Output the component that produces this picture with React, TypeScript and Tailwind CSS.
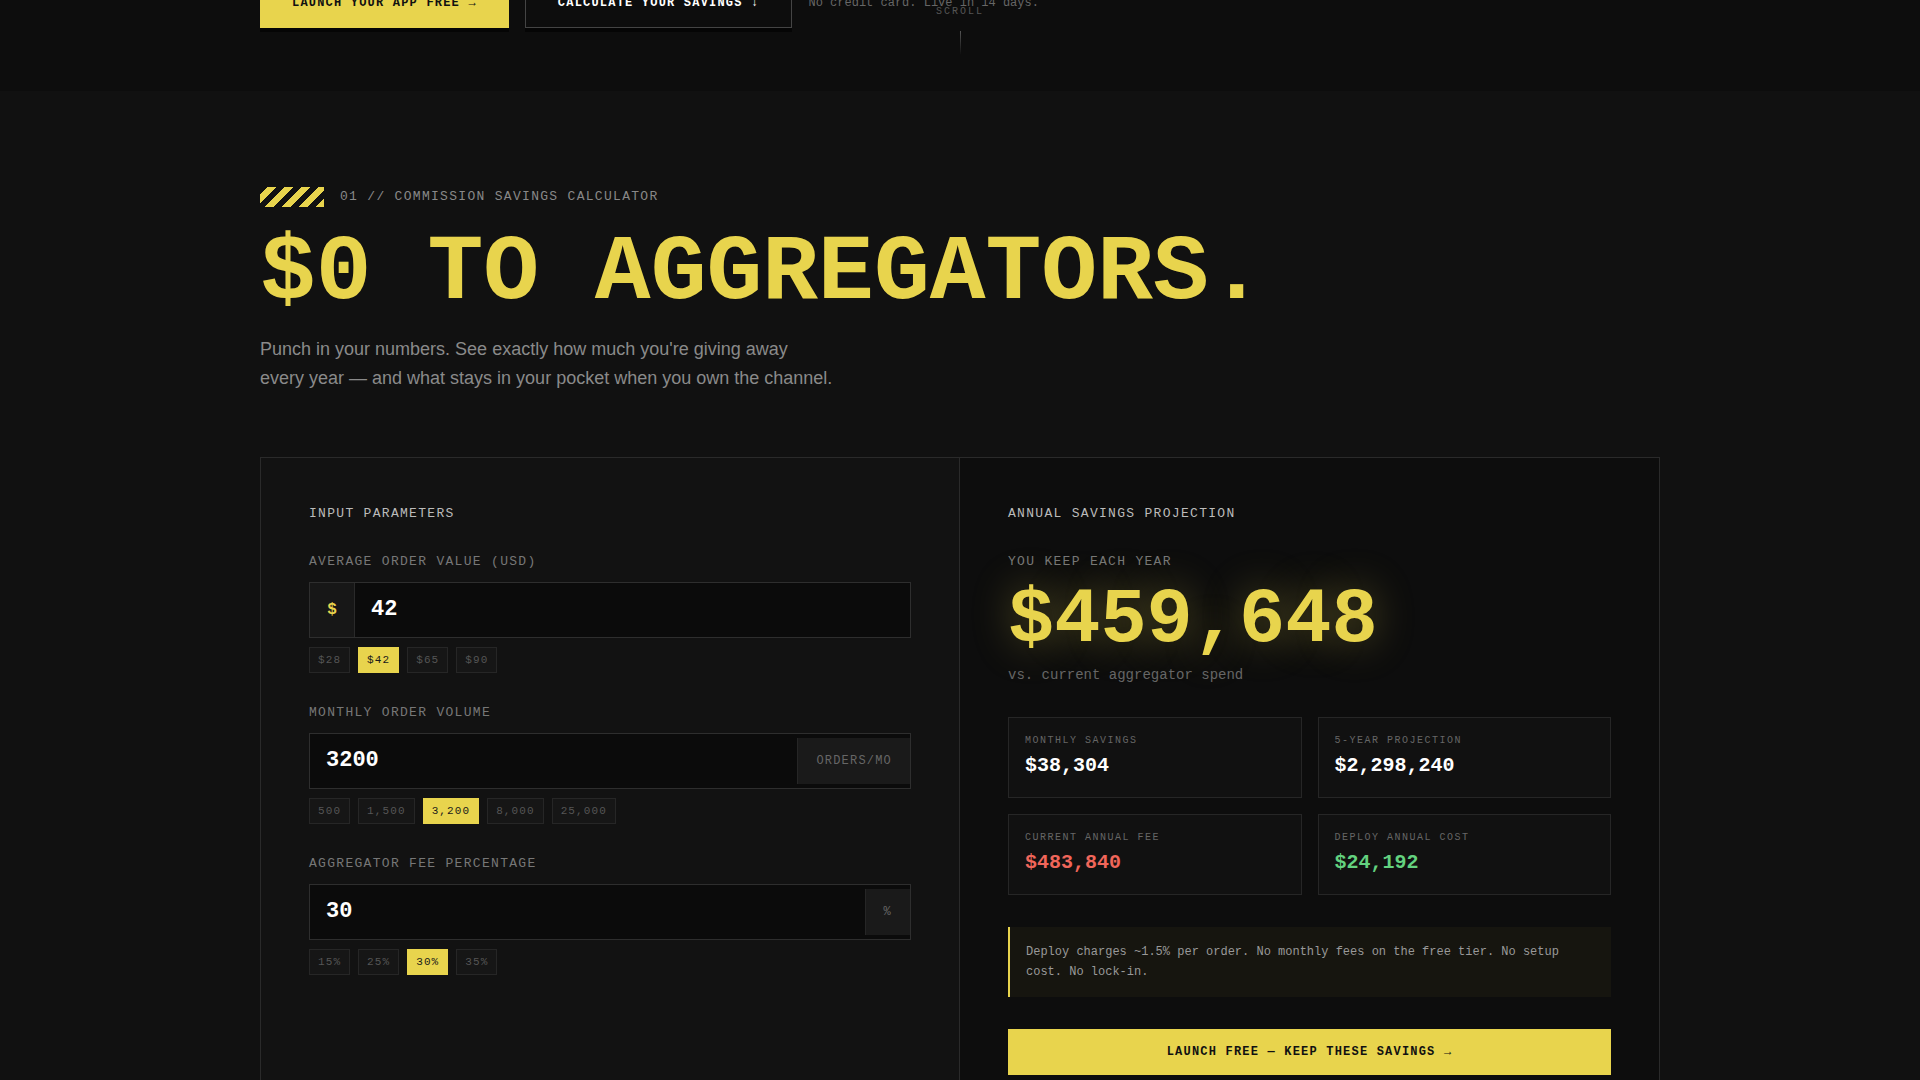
import React from 'react';

const mono = "font-['Liberation_Mono','DejaVu_Sans_Mono',monospace]";

type ChipProps = { label: string; active?: boolean };

const Chip = ({ label, active }: ChipProps) => (
  <button
    className={
      active
        ? 'border border-[#e8d44d] bg-[#e8d44d] px-2 py-1 text-[11px] leading-4 tracking-[0.1em] text-[#1a1a1a]'
        : 'border border-[#262626] bg-[#161616] px-2 py-1 text-[11px] leading-4 tracking-[0.1em] text-[#555]'
    }
  >
    {label}
  </button>
);

type FieldProps = {
  label: string;
  value: string;
  prefix?: string;
  suffix?: string;
  chips: string[];
  active: string;
};

const Field = ({ label, value, prefix, suffix, chips, active }: FieldProps) => (
  <div className="mb-8">
    <div className="mb-3 text-[13px] leading-4 tracking-[0.1em] text-[#777]">{label}</div>
    <div className="flex h-[56px] items-stretch border border-[#2e2e2e] bg-[#0b0b0b]">
      {prefix && (
        <div className="flex w-[45px] items-center justify-center border-r border-[#2a2a2a] bg-[#171717] text-base font-bold text-[#e8d44d]">
          {prefix}
        </div>
      )}
      <input
        defaultValue={value}
        readOnly
        className={`min-w-0 flex-1 bg-transparent px-4 text-[22px] font-bold text-white outline-none ${mono}`}
      />
      {suffix && (
        <div className="my-[4px] flex items-center border-l border-[#262626] bg-[#1a1a1a] px-[18px] text-xs tracking-[0.1em] text-[#666]">
          {suffix}
        </div>
      )}
    </div>
    <div className="mt-[9px] flex gap-2">
      {chips.map((c) => (
        <Chip key={c} label={c} active={c === active} />
      ))}
    </div>
  </div>
);

type StatProps = { label: string; value: string; color: string };

const Stat = ({ label, value, color }: StatProps) => (
  <div className="border border-[#262626] bg-[#111] px-4 pt-4 pb-[19px]">
    <div className="text-[10px] leading-[13px] tracking-[0.15em] text-[#666]">{label}</div>
    <div className={`mt-[7px] text-xl leading-6 font-bold ${color}`}>{value}</div>
  </div>
);

export default function App() {
  return (
    <div className={`min-h-screen bg-[#111] ${mono}`}>
      {/* hero tail */}
      <section className="relative h-[91px] overflow-hidden bg-[#0d0d0d]">
        <div className="mx-auto -mt-[22px] flex max-w-[1400px] items-center gap-4">
          <button className="bg-[#e8d44d] px-8 py-4 text-xs leading-[18px] font-bold tracking-[0.1em] text-[#111] shadow-[0_4px_0_#050505]">
            LAUNCH YOUR APP FREE →
          </button>
          <button className="border border-[#444] px-8 py-[15px] text-xs leading-[18px] font-bold tracking-[0.1em] text-white shadow-[0_4px_0_#050505]">
            CALCULATE YOUR SAVINGS ↓
          </button>
          <span className="text-xs text-[#666]">No credit card. Live in 14 days.</span>
        </div>
        <div className="absolute top-[6px] left-1/2 flex -translate-x-1/2 flex-col items-center gap-[13px]">
          <span className="text-[10px] leading-3 tracking-[0.2em] text-[#555]">SCROLL</span>
          <span className="h-6 w-px bg-gradient-to-b from-[#555] to-transparent" />
        </div>
      </section>

      {/* calculator */}
      <section className="bg-[#111] pb-24">
        <div className="mx-auto max-w-[1400px] pt-[96px]">
          <div className="flex items-center gap-4">
            <span className="h-5 w-16 bg-[repeating-linear-gradient(-45deg,#e8d44d_0_6px,#111_6px_12px)]" />
            <span className="text-[13px] leading-5 tracking-[0.1em] text-[#888]">
              01 // COMMISSION SAVINGS CALCULATOR
            </span>
          </div>
          <h1 className="mt-5 text-[93px] leading-none font-bold text-[#e8d44d]">$0 TO AGGREGATORS.</h1>
          <p className="mt-[15px] max-w-xl font-['Liberation_Sans',Arial,sans-serif] text-lg leading-[1.6] text-[#8a8a8a]">
            Punch in your numbers. See exactly how much you're giving away every year — and what stays in
            your pocket when you own the channel.
          </p>

          <div className="mt-16 grid grid-cols-2 border border-[#2a2a2a]">
            {/* inputs */}
            <div className="border-r border-[#2a2a2a] bg-[#121212] p-12">
              <div className="mb-8 text-[13px] leading-4 tracking-[0.1em] text-[#bbb]">INPUT PARAMETERS</div>
              <Field
                label="AVERAGE ORDER VALUE (USD)"
                value="42"
                prefix="$"
                chips={['$28', '$42', '$65', '$90']}
                active="$42"
              />
              <Field
                label="MONTHLY ORDER VOLUME"
                value="3200"
                suffix="ORDERS/MO"
                chips={['500', '1,500', '3,200', '8,000', '25,000']}
                active="3,200"
              />
              <Field
                label="AGGREGATOR FEE PERCENTAGE"
                value="30"
                suffix="%"
                chips={['15%', '25%', '30%', '35%']}
                active="30%"
              />
            </div>

            {/* projection */}
            <div className="bg-[#0d0d0d] p-12">
              <div className="mb-8 text-[13px] leading-4 tracking-[0.1em] text-[#bbb]">ANNUAL SAVINGS PROJECTION</div>
              <div className="mb-3 text-[13px] leading-4 tracking-[0.1em] text-[#777]">YOU KEEP EACH YEAR</div>
              <div className="text-[77px] leading-none font-bold text-[#e8d44d] [text-shadow:0_0_40px_rgba(232,212,77,0.35)]">
                $459,648
              </div>
              <div className="mt-[6px] text-sm leading-5 text-[#666]">vs. current aggregator spend</div>

              <div className="mt-8 grid grid-cols-2 gap-4">
                <Stat label="MONTHLY SAVINGS" value="$38,304" color="text-white" />
                <Stat label="5-YEAR PROJECTION" value="$2,298,240" color="text-white" />
                <Stat label="CURRENT ANNUAL FEE" value="$483,840" color="text-[#f0665a]" />
                <Stat label="DEPLOY ANNUAL COST" value="$24,192" color="text-[#63d27f]" />
              </div>

              <div className="mt-8 border-l-2 border-[#e8d44d] bg-[#16150f] px-4 py-[15px] text-xs leading-5 text-[#999]">
                Deploy charges ~1.5% per order. No monthly fees on the free tier. No setup cost. No lock-in.
              </div>

              <button className="mt-8 w-full bg-[#e8d44d] py-[14px] text-xs leading-[18px] font-bold tracking-[0.1em] text-[#111]">
                LAUNCH FREE — KEEP THESE SAVINGS →
              </button>
            </div>
          </div>
        </div>
      </section>
    </div>
  );
}
